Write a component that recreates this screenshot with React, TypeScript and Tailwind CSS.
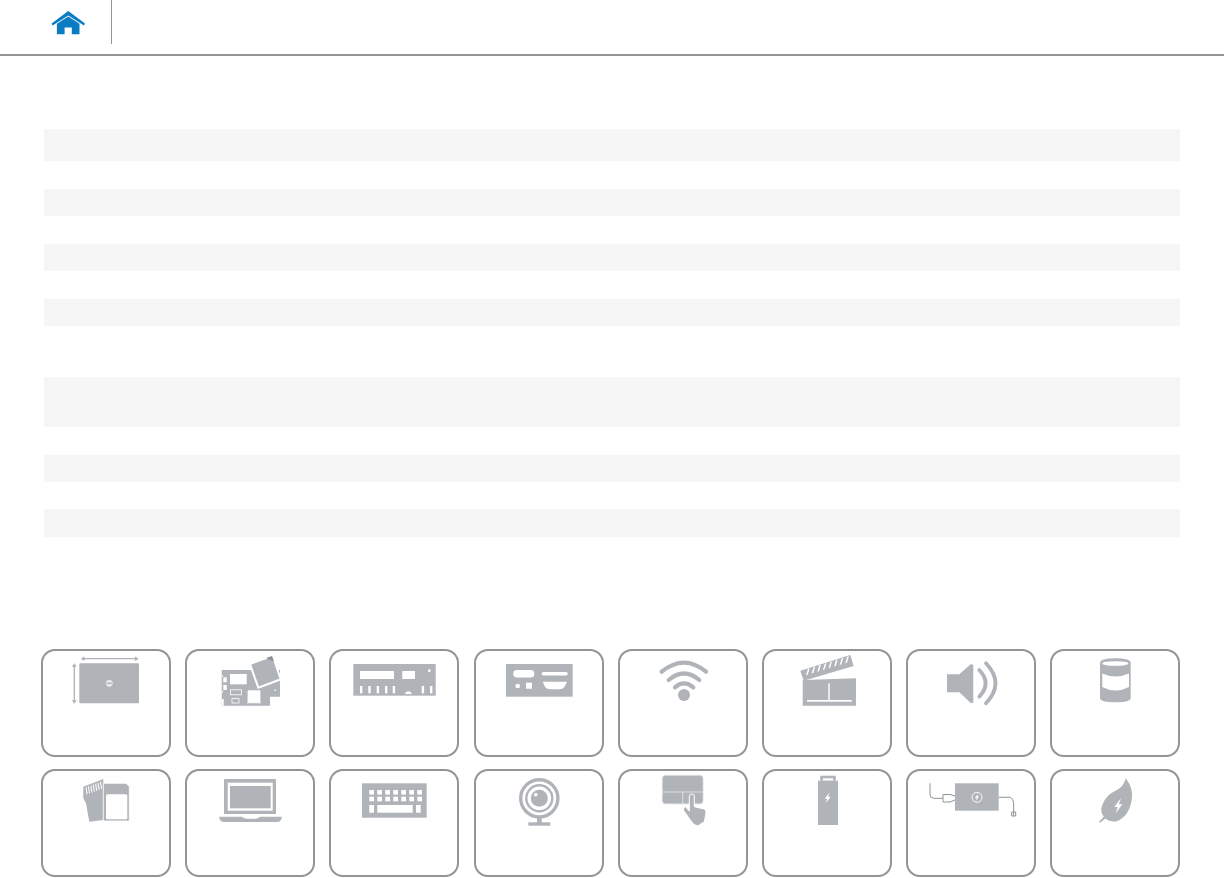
const GRAY = "#b0b4b9";

// striped bars of the (empty) spec table
const BARS = [
  "mt-[73px] h-[32px]",
  "mt-[28px] h-[27px]",
  "mt-[28px] h-[27px]",
  "mt-[28px] h-[27px]",
  "mt-[51px] h-[50px]",
  "mt-[28px] h-[27px]",
  "mt-[27px] h-[28px]",
];

function HomeIcon() {
  return (
    <svg width="36" height="28" viewBox="50 9 36 28" className="block">
      <path d="M68.3 11 L85 23.4 L84 25.6 L68.3 15.4 L52.6 25.6 L51.6 23.4 Z" fill="#0a7cc1" />
      <path d="M68.3 16.6 L79.5 23.8 V34.2 H71.8 V27.4 H64.6 V34.2 H56.9 V23.8 Z" fill="#0a7cc1" />
    </svg>
  );
}

function Bolt({ x, y, s = 1 }: { x: number; y: number; s?: number }) {
  return (
    <path
      transform={`translate(${x} ${y}) scale(${s})`}
      d="M2 -5.5 L-3 1 L-0.4 1 L-2 5.5 L3 -1 L0.4 -1 Z"
      fill="#fff"
    />
  );
}

const ICONS = [
  // display
  <g key="display">
    <rect x="38.3" y="14.3" width="59.7" height="40" rx="1" fill={GRAY} />
    <circle cx="68.3" cy="34.3" r="3.4" fill="#e8e9ea" />
    <rect x="65.6" y="33.6" width="5.4" height="1.4" fill={GRAY} />
    <path d="M42 9.7 H95.5 M43.5 8 L41 9.7 L43.5 11.4 M94 8 L96.5 9.7 L94 11.4" stroke={GRAY} strokeWidth="1.3" fill="none" />
    <path d="M33.3 16 V53 M31.6 18 L33.3 15.4 L35 18 M31.6 51 L33.3 53.6 L35 51" stroke={GRAY} strokeWidth="1.3" fill="none" />
  </g>,
  // mainboard
  <g key="board">
    <path d="M36.7 21 H95 V47.7 H85 V56.7 H36.7 Z" fill={GRAY} />
    <rect x="45" y="25" width="16.7" height="10.3" fill="#fff" />
    <rect x="45.5" y="40.8" width="11" height="5" fill="none" stroke="#fff" strokeWidth="0.8" />
    <rect x="47" y="49.6" width="7" height="4.4" fill="none" stroke="#fff" strokeWidth="0.8" />
    <rect x="63" y="41.7" width="12" height="12" fill="#fff" stroke="#fff" strokeWidth="1.4" strokeDasharray="1.2 0.9" />
    <rect x="38.3" y="28.3" width="3.4" height="5" fill="#fff" />
    <rect x="38.3" y="36" width="3.4" height="5" fill="#fff" />
    <rect x="36.7" y="50" width="2" height="6.7" fill="#fff" />
    <rect x="36.7" y="26" width="1.2" height="1.6" fill="#fff" />
    <rect x="36.7" y="42" width="1.2" height="1.6" fill="#fff" />
    <rect x="89.5" y="40.5" width="1.6" height="1.4" fill="#fff" />
    <path d="M65 15 L87.7 6.7 L95.7 30.3 L73.3 38.7 Z" fill={GRAY} stroke="#fff" strokeWidth="2" />
    <path d="M81 9 L87 6.9 L89 12.5 Z" fill="#8b9095" />
  </g>,
  // rear ports
  <g key="ports-a">
    <rect x="24.3" y="15" width="82.4" height="31.7" fill={GRAY} />
    <rect x="31" y="22" width="34" height="8" fill="#fff" />
    <rect x="73.3" y="22" width="12.7" height="8" fill="#fff" />
    <circle cx="100.3" cy="21.7" r="1.4" fill="#fff" />
    {[31, 39.3, 47.7, 56, 63.7, 92.7, 101].map((x) => (
      <rect key={x} x={x} y="37" width="2.4" height="7.4" fill="#fff" />
    ))}
    <path d="M76 45 A3.4 3.4 0 0 1 82.7 45 Z" fill="#fff" />
  </g>,
  // side ports
  <g key="ports-b">
    <rect x="32" y="15" width="66.7" height="32.7" fill={GRAY} />
    <rect x="39.3" y="21" width="21" height="7.4" rx="3.5" fill="#fff" />
    <circle cx="43.7" cy="37" r="2.3" fill="#fff" />
    <rect x="52" y="33.7" width="6" height="6" fill="#fff" />
    <rect x="67.7" y="23" width="26" height="3.6" rx="1.8" fill="#fff" />
    <path d="M68.7 32.7 H93 L91 37 Q89 40.3 85 40.3 H77 Q72 40.3 70.6 37 Z" fill="#fff" />
  </g>,
  // wifi
  <g key="wifi" fill="none" stroke={GRAY} strokeWidth="4.2" strokeLinecap="round">
    <path d="M43.7 22.7 Q66 4.5 88 22.7" />
    <path d="M50.7 31 Q66 18 81.3 31" />
    <path d="M57 38.3 Q66 30.5 75.3 38.3" />
    <circle cx="66" cy="46" r="6" fill={GRAY} stroke="none" />
  </g>,
  // clapper board
  <g key="clapper">
    <path d="M40.7 31 L94 29.3 V56.7 H40.7 Z" fill={GRAY} />
    <rect x="45" y="51" width="44.7" height="1.7" fill="#fff" />
    <rect x="66.3" y="34.3" width="1.4" height="17" fill="#fff" />
    <path d="M38.3 21.7 L88.3 6 L91.7 17 L41.7 31.7 Z" fill={GRAY} />
    {[0, 1, 2, 3, 4, 5, 6, 7].map((i) => (
      <path key={i} d={`M${44 + i * 5.6} ${26.2 - i * 1.72} l2 -6.4 l1.7 -.5 l-2 6.4 Z`} fill="#fff" />
    ))}
  </g>,
  // speaker
  <g key="speaker">
    <path d="M41 25.3 H53.3 L65 15 L67.3 16 V53.7 L65 54.3 L53.3 43.3 H41 Z" fill={GRAY} />
    <path d="M73.3 21 Q86 34.3 73.3 47.7" fill="none" stroke={GRAY} strokeWidth="3.8" strokeLinecap="round" />
    <path d="M80 14.3 Q99 34.3 80 54.3" fill="none" stroke={GRAY} strokeWidth="3.8" strokeLinecap="round" />
  </g>,
  // storage
  <g key="storage">
    <path d="M50 14 Q50 9.3 65.3 9.3 Q80.7 9.3 80.7 14 V49 Q80.7 53.3 65.3 53.3 Q50 53.3 50 49 Z" fill={GRAY} />
    <ellipse cx="65.3" cy="14.5" rx="13" ry="2.3" fill="#fff" />
    <path d="M52.3 24.5 Q65.3 30.5 79 24.5 V38 Q65.3 45 52.3 38 Z" fill="#fff" />
  </g>,
  // media cards
  <g key="cards">
    <path d="M42.3 17.7 L62.3 10 V51 L48.3 52.7 L45 34.3 L42.3 29.3 Z" fill={GRAY} />
    {[0, 1, 2, 3, 4, 5, 6].map((i) => (
      <path key={i} d={`M${44.5 + i * 2.4} ${18.5 - i * 0.9} l1.2 7 l1 -.3 l-1.2 -7 Z`} fill="#fff" />
    ))}
    <path d="M62.3 14.3 H85 L88.3 17.5 V52 H62.3 Z" fill={GRAY} stroke="#fff" strokeWidth="0.8" />
    <rect x="65" y="25.3" width="21.3" height="25" rx="1.5" fill="#fff" />
  </g>,
  // laptop
  <g key="laptop">
    <rect x="39" y="10" width="52" height="35" rx="0.6" fill={GRAY} />
    <rect x="42.7" y="13.7" width="45" height="28" fill="#fff" />
    <rect x="45" y="17" width="40.7" height="22.3" fill={GRAY} />
    <path d="M34 47.7 H57 Q59 49.7 62 49.7 H70 Q73 49.7 75 47.7 H97 L96 51 Q95 53 92 53 H39 Q36 53 35 51 Z" fill={GRAY} />
  </g>,
  // keyboard
  <g key="keyboard">
    <rect x="33" y="14.3" width="64.7" height="34.4" fill={GRAY} />
    {[21, 27.7].map((y) =>
      [0, 1, 2, 3, 4, 5, 6].map((i) => (
        <rect key={`${y}-${i}`} x={40.3 + i * 8} y={y} width="4.7" height="4.6" fill="#fff" />
      )),
    )}
    <rect x="40.3" y="36" width="4.7" height="7.7" fill="#fff" />
    <rect x="48.3" y="36" width="35.4" height="7.7" fill="#fff" />
    <rect x="87" y="36" width="4.7" height="7.7" fill="#fff" />
  </g>,
  // webcam
  <g key="webcam">
    <rect x="63" y="48" width="4.7" height="6" fill={GRAY} />
    <rect x="54.3" y="53.3" width="22" height="3.4" fill={GRAY} />
    <circle cx="65.3" cy="29.3" r="18.6" fill="#fff" stroke={GRAY} strokeWidth="3.4" />
    <circle cx="65.3" cy="29.3" r="13" fill="none" stroke={GRAY} strokeWidth="2.4" />
    <circle cx="65.3" cy="29.3" r="8.5" fill={GRAY} />
    <circle cx="61.8" cy="25.8" r="1.8" fill="#fff" />
  </g>,
  // touchpad
  <g key="touchpad">
    <rect x="44.4" y="6.4" width="40.6" height="28.4" rx="3" fill={GRAY} stroke="#d5d7da" strokeWidth="0.8" />
    <path d="M44.5 23 H85 M64.7 23 V35" stroke="#e6e7e9" strokeWidth="0.8" fill="none" />
    <path
      d="M71.3 27 Q71.3 25 73.8 25 Q76.3 25 76.3 27 V37.7 L86 40 Q88.4 41 88 44 L86.3 52.7 L80.3 56.7 Q77 56.7 74.7 54.3 L65.3 41 Q65.3 37.7 67.5 37.7 L71.3 42 Z"
      fill={GRAY}
      stroke="#fff"
      strokeWidth="1"
    />
  </g>,
  // battery
  <g key="battery">
    <rect x="58.3" y="6.7" width="15.4" height="5" fill={GRAY} />
    <rect x="61" y="9.3" width="10" height="2.4" fill="#fff" />
    <rect x="56" y="11.7" width="20" height="44.3" fill={GRAY} />
    <Bolt x={65.7} y={28.7} />
  </g>,
  // power adapter
  <g key="adapter">
    <rect x="49" y="14.3" width="43.7" height="27.4" fill={GRAY} />
    <circle cx="71" cy="28.3" r="5" fill="none" stroke="#fff" strokeWidth="0.9" />
    <Bolt x={71} y={28.3} s={0.7} />
    <path d="M24 14.3 V26 Q24 29.3 28 29.3 H37 M37 25.5 H44 L49 27 M37 33 H44 L49 31 M37 25.5 V33" fill="none" stroke="#8f9398" strokeWidth="1" />
    <path d="M92.7 28.3 H104.5 Q107.7 30 107.7 35 V47 M105.7 43 H109.7 V47 H105.7 Z" fill="none" stroke="#8f9398" strokeWidth="1" />
  </g>,
  // eco
  <g key="leaf">
    <path d="M75.7 9.3 Q84 20 81.7 31 Q79 48 66 52.5 Q59 53 55.5 49.5 L50 53.8 L49 52.8 L53.8 47.8 Q49.5 42 52.5 35.5 Q56 26 65 22 Q74 18 75.7 9.3 Z" fill={GRAY} />
    <Bolt x={68.3} y={36.7} s={1.35} />
  </g>,
];

function Card({ children }: { children: React.ReactNode }) {
  return (
    <div className="h-[108px] rounded-[14px] border-2 border-[#949494] bg-white">
      {/* coordinates in the icons are measured from the card's outer corner */}
      <svg viewBox="2 2 126 60" className="block h-[60px] w-[126px]">
        {children}
      </svg>
    </div>
  );
}

export default function App() {
  return (
    <div className="min-h-[878px] w-[1224px] overflow-hidden bg-white font-['Liberation_Sans',sans-serif]">
      <header className="flex h-[56px] items-start border-b-2 border-[#949494]">
        <div className="ml-[50px] mt-[9px]">
          <HomeIcon />
        </div>
        <div className="ml-[25px] h-[44px] w-px bg-[#949494]" />
      </header>

      <div className="mx-[44px] w-[1136px]">
        {BARS.map((cls, i) => (
          <div key={i} className={`${cls} bg-[#f6f6f6]`} />
        ))}
      </div>

      <div className="ml-[41px] mt-[112px] grid w-[1139.4px] grid-cols-8 gap-x-[14.2px] gap-y-[12px]">
        {ICONS.map((icon, i) => (
          <Card key={i}>{icon}</Card>
        ))}
      </div>
    </div>
  );
}
